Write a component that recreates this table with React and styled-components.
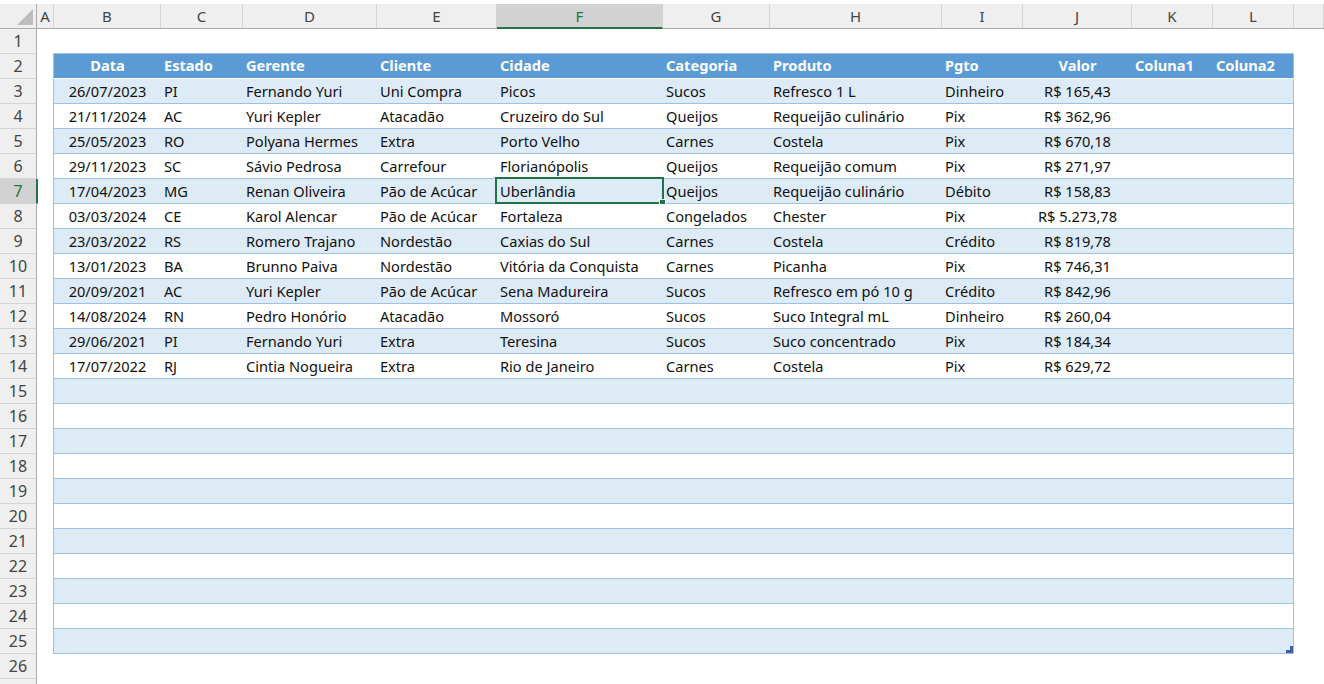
import React from "react";
import styled, { createGlobalStyle, css } from "styled-components";

const GlobalStyle = createGlobalStyle`
  html, body {
    margin: 0;
    padding: 0;
    background: #fff;
  }
  body {
    font-family: "Noto Sans", "Open Sans", sans-serif;
    overflow: hidden;
  }
`;

const GREEN = "#217346";
const TABLE_LINE = "#9bc2e6";

// widths of B..L inside the table (no borders)
const colWidths = [107, 82, 134, 120, 166, 107, 172, 81, 109, 81, 80];
const letters = ["B", "C", "D", "E", "F", "G", "H", "I", "J", "K", "L"];
const tableCols = colWidths.map((w) => `${w}px`).join(" ");
const barCols = colWidths.map((w, i) => `${i === 10 ? w + 1 : w}px`).join(" ");

const headers = [
  { label: "Data", align: "center" },
  { label: "Estado" },
  { label: "Gerente" },
  { label: "Cliente" },
  { label: "Cidade" },
  { label: "Categoria" },
  { label: "Produto" },
  { label: "Pgto" },
  { label: "Valor", align: "center" },
  { label: "Coluna1" },
  { label: "Coluna2" },
];

const data = [
  ["26/07/2023", "PI", "Fernando Yuri", "Uni Compra", "Picos", "Sucos", "Refresco 1 L", "Dinheiro", "R$ 165,43"],
  ["21/11/2024", "AC", "Yuri Kepler", "Atacadão", "Cruzeiro do Sul", "Queijos", "Requeijão culinário", "Pix", "R$ 362,96"],
  ["25/05/2023", "RO", "Polyana Hermes", "Extra", "Porto Velho", "Carnes", "Costela", "Pix", "R$ 670,18"],
  ["29/11/2023", "SC", "Sávio Pedrosa", "Carrefour", "Florianópolis", "Queijos", "Requeijão comum", "Pix", "R$ 271,97"],
  ["17/04/2023", "MG", "Renan Oliveira", "Pão de Acúcar", "Uberlândia", "Queijos", "Requeijão culinário", "Débito", "R$ 158,83"],
  ["03/03/2024", "CE", "Karol Alencar", "Pão de Acúcar", "Fortaleza", "Congelados", "Chester", "Pix", "R$ 5.273,78"],
  ["23/03/2022", "RS", "Romero Trajano", "Nordestão", "Caxias do Sul", "Carnes", "Costela", "Crédito", "R$ 819,78"],
  ["13/01/2023", "BA", "Brunno Paiva", "Nordestão", "Vitória da Conquista", "Carnes", "Picanha", "Pix", "R$ 746,31"],
  ["20/09/2021", "AC", "Yuri Kepler", "Pão de Acúcar", "Sena Madureira", "Sucos", "Refresco em pó 10 g", "Crédito", "R$ 842,96"],
  ["14/08/2024", "RN", "Pedro Honório", "Atacadão", "Mossoró", "Sucos", "Suco Integral mL", "Dinheiro", "R$ 260,04"],
  ["29/06/2021", "PI", "Fernando Yuri", "Extra", "Teresina", "Sucos", "Suco concentrado", "Pix", "R$ 184,34"],
  ["17/07/2022", "RJ", "Cintia Nogueira", "Extra", "Rio de Janeiro", "Carnes", "Costela", "Pix", "R$ 629,72"],
];

const SELECTED_ROW = 7;
const SELECTED_COL = 4; // F

const Sheet = styled.div`
  padding-top: 4px;
  width: 1324px;
  height: 684px;
  box-sizing: border-box;
  overflow: hidden;
`;

const ColumnBar = styled.div`
  display: grid;
  grid-template-columns: 37px 17px ${barCols} 1fr;
  height: 25px;
  background: #efefef;
  border-bottom: 1px solid #ababab;
  box-sizing: border-box;
`;

const Corner = styled.div`
  position: relative;
  border-right: 1px solid #ababab;
  svg {
    position: absolute;
    right: 3px;
    bottom: 3px;
  }
`;

const ColLetter = styled.div`
  display: flex;
  align-items: center;
  justify-content: center;
  font-size: 15px;
  color: #444;
  border-right: 1px solid #d4d4d4;
  box-sizing: border-box;
  ${(p) =>
    p.$selected &&
    css`
      background: #d2d2d2;
      color: ${GREEN};
      border-bottom: 2px solid ${GREEN};
      margin-bottom: -1px;
    `}
`;

const SheetRow = styled.div`
  display: grid;
  grid-template-columns: 37px 16px 1241px 1fr;
  height: 25px;
`;

const RowNum = styled.div`
  display: flex;
  align-items: center;
  justify-content: center;
  font-size: 16px;
  color: #444;
  background: ${(p) => (p.$selected ? "#d2d2d2" : "#efefef")};
  border-bottom: 1px solid #d4d4d4;
  border-right: ${(p) => (p.$selected ? `2px solid ${GREEN}` : "1px solid #ababab")};
  box-sizing: border-box;
  ${(p) =>
    p.$selected &&
    css`
      color: ${GREEN};
      margin-right: -1px;
    `}
`;

const Blank = styled.div``;

const TableRow = styled.div`
  position: relative;
  display: grid;
  grid-template-columns: ${tableCols};
  border-left: 1px solid ${TABLE_LINE};
  border-right: 1px solid ${TABLE_LINE};
  border-bottom: 1px solid ${TABLE_LINE};
  box-sizing: border-box;
  background: ${(p) => (p.$head ? "#5b9bd5" : p.$band ? "#ddebf7" : "#fff")};
  ${(p) => p.$head && css`border-bottom-color: #5b9bd5; border-top: 1px solid ${TABLE_LINE}; margin-top: -1px; height: 25px;`}
`;

const Cell = styled.div`
  position: relative;
  display: flex;
  align-items: center;
  justify-content: ${(p) => (p.$align === "center" ? "center" : "flex-start")};
  padding: 0 3px;
  font-size: 14.6px;
  color: ${(p) => (p.$head ? "#fff" : "#111")};
  font-weight: ${(p) => (p.$head ? 700 : 400)};
  white-space: nowrap;
  overflow: visible;
  line-height: 1;
`;

const Selection = styled.div`
  position: absolute;
  left: -2px;
  top: -2px;
  right: -1px;
  bottom: -1px;
  border: 2px solid ${GREEN};
  pointer-events: none;
  &::after {
    content: "";
    position: absolute;
    right: -4px;
    bottom: -4px;
    width: 5px;
    height: 5px;
    background: ${GREEN};
    border: 1px solid #fff;
  }
`;

const ResizeGrip = styled.svg`
  position: absolute;
  right: 0;
  bottom: 0;
`;

function TableLine({ row, cells, band, head, last }) {
  return (
    <TableRow $band={band} $head={head}>
      {letters.map((l, i) => {
        const align = i === 0 || i === 8 ? "center" : "left";
        return (
          <Cell key={l} $align={head ? headers[i].align : align} $head={head}>
            {head ? headers[i].label : cells?.[i] || ""}
            {row === SELECTED_ROW && i === SELECTED_COL && <Selection />}
          </Cell>
        );
      })}
      {last && (
        <ResizeGrip width="7" height="7" viewBox="0 0 7 7">
          <path d="M4 0H7V7H0V4H4Z" fill="#3f5fae" />
        </ResizeGrip>
      )}
    </TableRow>
  );
}

export default function App() {
  const rows = [];
  for (let n = 1; n <= 27; n++) {
    let content = <Blank />;
    if (n === 2) content = <TableLine row={n} head />;
    else if (n >= 3 && n <= 25)
      content = <TableLine row={n} band={n % 2 === 1} cells={data[n - 3]} last={n === 25} />;
    rows.push(
      <SheetRow key={n}>
        <RowNum $selected={n === SELECTED_ROW}>{n <= 26 ? n : ""}</RowNum>
        <Blank />
        {content}
        <Blank />
      </SheetRow>
    );
  }

  return (
    <>
      <GlobalStyle />
      <Sheet>
        <ColumnBar>
          <Corner>
            <svg width="16" height="16" viewBox="0 0 16 16">
              <path d="M16 0V16H0Z" fill="#bdbdbd" />
            </svg>
          </Corner>
          <ColLetter>A</ColLetter>
          {letters.map((l, i) => (
            <ColLetter key={l} $selected={i === SELECTED_COL}>
              {l}
            </ColLetter>
          ))}
          <ColLetter />
        </ColumnBar>
        {rows}
      </Sheet>
    </>
  );
}
